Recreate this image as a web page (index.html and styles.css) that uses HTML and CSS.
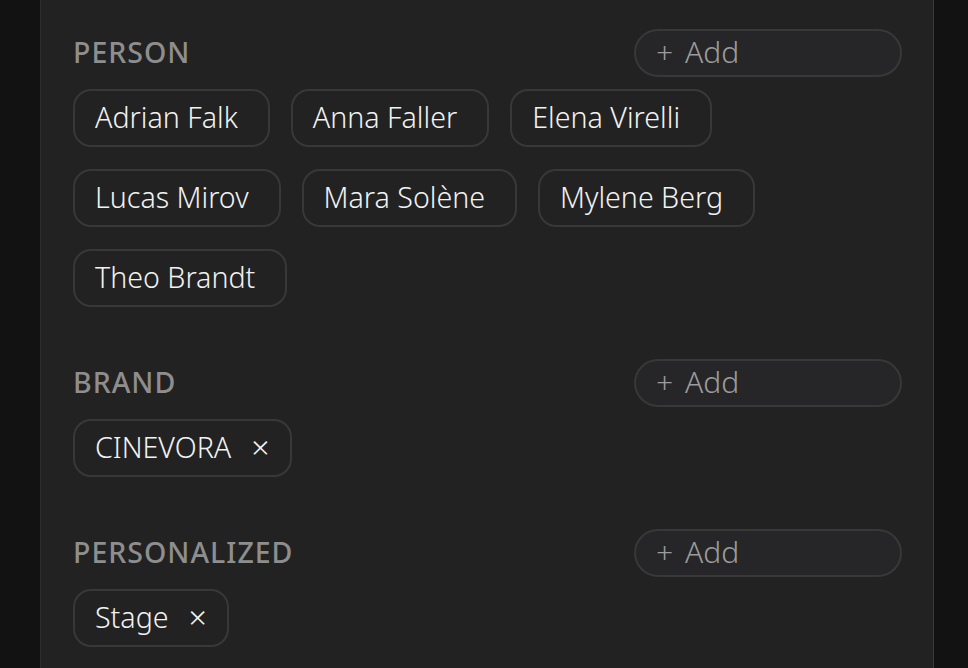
FILE: index.html
```html
<!DOCTYPE html>
<html>
<head>
<meta charset="utf-8">
<link rel="stylesheet" href="styles.css">
</head>
<body>
<div class="page">
  <div class="panel">
    <section class="section">
      <div class="head">
        <h2 class="label">PERSON</h2>
        <button class="add">+ Add</button>
      </div>
      <div class="chips">
        <span class="chip">Adrian Falk</span>
        <span class="chip">Anna Faller</span>
        <span class="chip">Elena Virelli</span>
        <span class="chip">Lucas Mirov</span>
        <span class="chip">Mara Solène</span>
        <span class="chip">Mylene Berg</span>
        <span class="chip">Theo Brandt</span>
      </div>
    </section>
    <section class="section">
      <div class="head">
        <h2 class="label">BRAND</h2>
        <button class="add">+ Add</button>
      </div>
      <div class="chips">
        <span class="chip removable">CINEVORA<span class="x">×</span></span>
      </div>
    </section>
    <section class="section">
      <div class="head">
        <h2 class="label">PERSONALIZED</h2>
        <button class="add">+ Add</button>
      </div>
      <div class="chips">
        <span class="chip removable">Stage<span class="x">×</span></span>
      </div>
    </section>
  </div>
</div>
</body>
</html>
```
FILE: styles.css
```css
html, body {
  margin: 0;
  padding: 0;
  background: #121212;
  height: 100%;
  overflow: hidden;
}
.page {
  padding: 0 34px 0 40px;
  height: 100%;
  font-family: "Noto Sans", "Open Sans", sans-serif;
}
.panel {
  background: #222222;
  border-left: 1px solid #2e2e2e;
  border-right: 1px solid #3a3a3a;
  height: 100%;
  padding: 29px 31px 0 32px;
  display: flex;
  flex-direction: column;
  gap: 52px;
}
.section {
  display: flex;
  flex-direction: column;
  gap: 12px;
}
.head {
  display: flex;
  justify-content: space-between;
  align-items: center;
  height: 48px;
}
.label {
  margin: 0 0 2px;
  font-size: 28.5px;
  font-weight: 500;
  color: #8e8e8e;
  letter-spacing: 1px;
}
.add {
  width: 268px;
  height: 48px;
  box-sizing: border-box;
  border: 2px solid #383838;
  border-radius: 24px;
  background: #262628;
  color: #9c9c9c;
  font-family: inherit;
  font-weight: 300;
  font-size: 30px;
  word-spacing: 4px;
  text-align: left;
  padding: 0 0 3px 20px;
  line-height: 1;
}
.chips {
  display: flex;
  flex-wrap: wrap;
  gap: 22px 21px;
}
.chip {
  box-sizing: border-box;
  height: 58px;
  display: inline-flex;
  align-items: center;
  padding: 0 30px 3px 20px;
  border: 2px solid #383838;
  border-radius: 18px;
  color: #f2f2f2;
  font-size: 28.6px;
  font-weight: 300;
}
.chip.removable {
  padding-right: 20px;
}
.x {
  margin-left: 20px;
  font-size: 32px;
  color: #f2f2f2;
}
```
